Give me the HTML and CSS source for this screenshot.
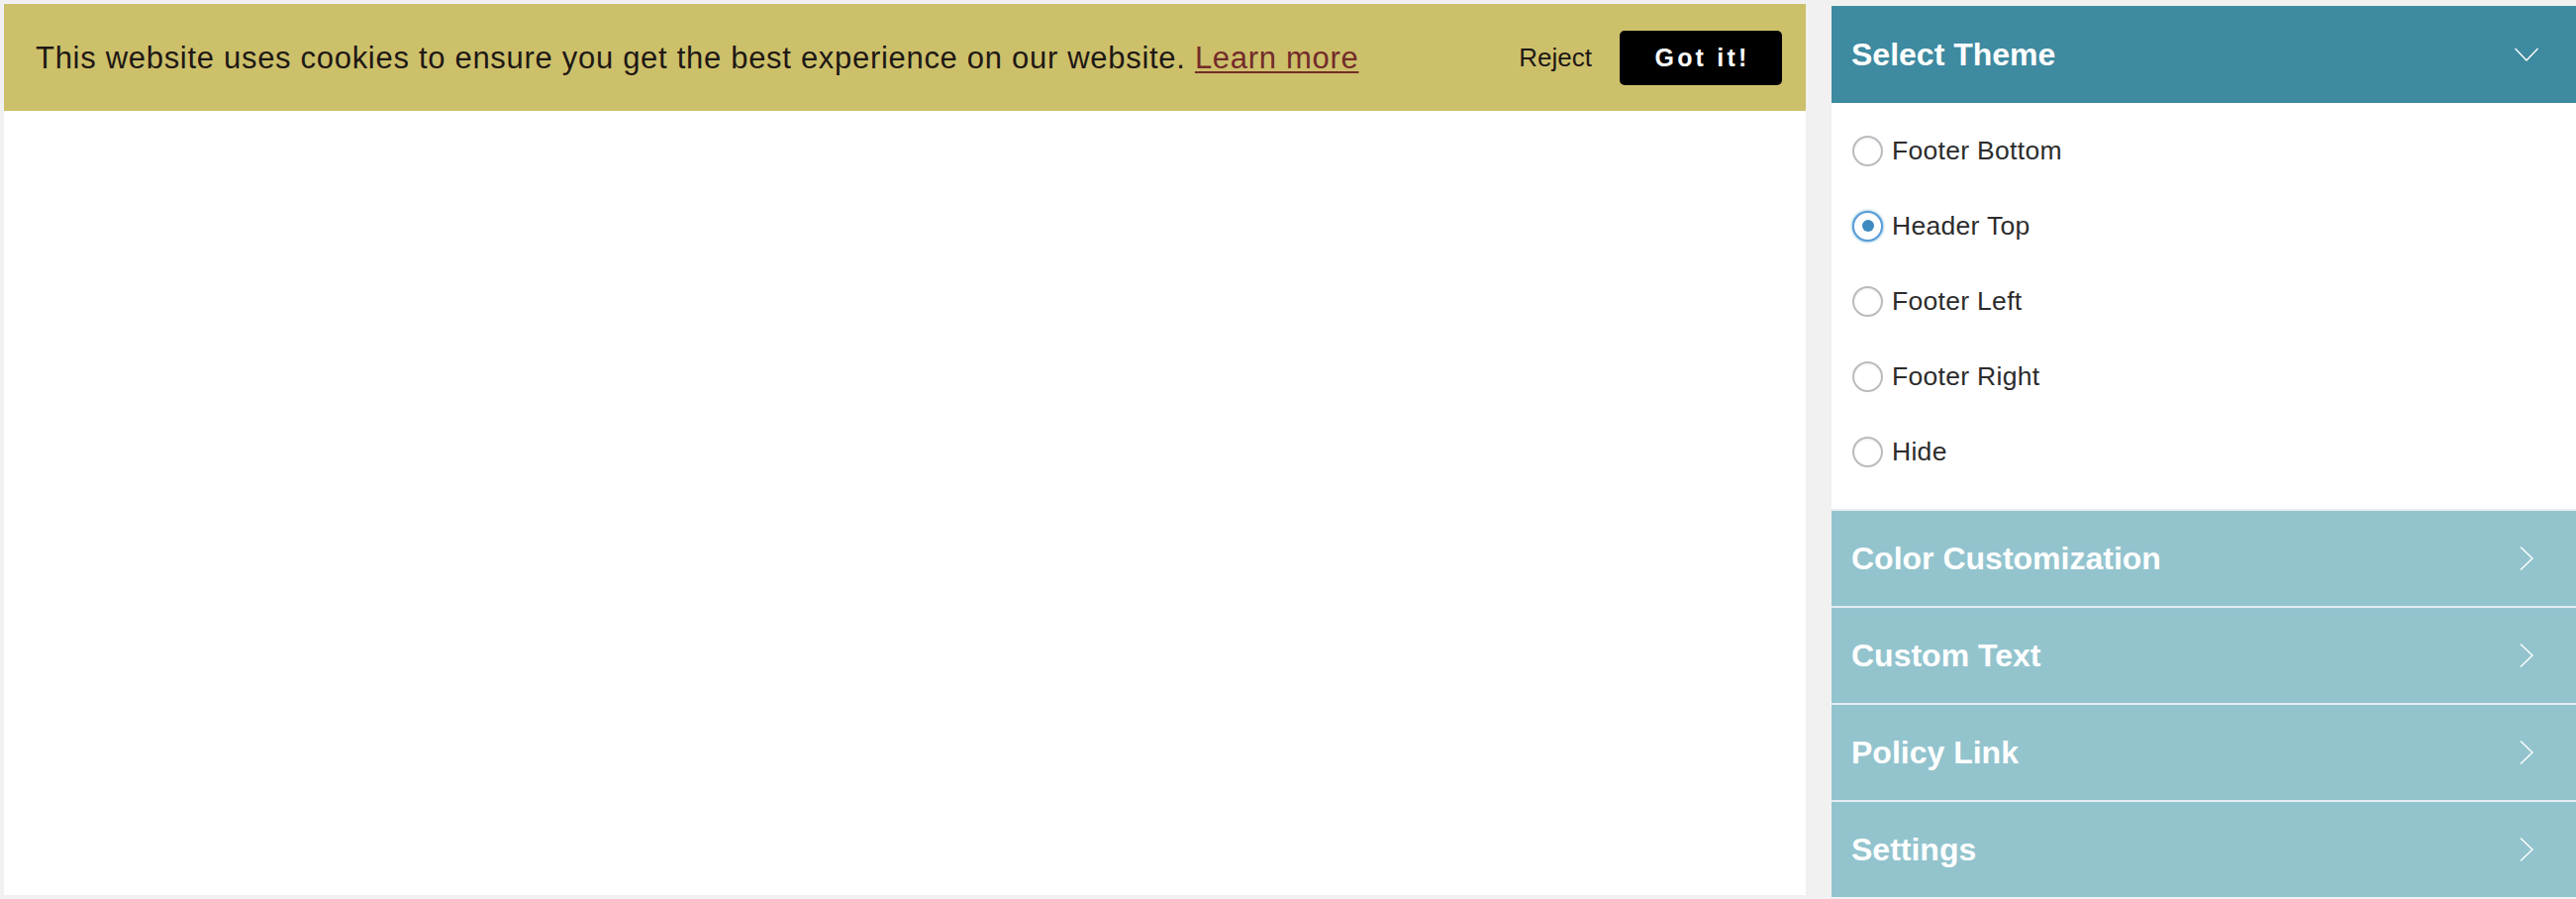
FILE: index.html
```html
<!DOCTYPE html>
<html lang="en">
<head>
<meta charset="utf-8">
<title>Cookie Notice Preview</title>
<link rel="stylesheet" href="styles.css">
</head>
<body>
<div class="page">
  <main class="preview">
    <div class="cookie-bar">
      <p class="cookie-text">This website uses cookies to ensure you get the best experience on our website. <a href="#" class="learn">Learn more</a></p>
      <div class="cookie-actions">
        <button class="reject" type="button">Reject</button>
        <button class="accept" type="button">Got it!</button>
      </div>
    </div>
  </main>
  <aside class="panel">
    <section class="section open">
      <div class="section-head active">
        <span class="section-title">Select Theme</span>
        <svg class="chev" width="24" height="24" viewBox="0 0 24 24"><polyline points="0.5,6 12,18 23.5,6" fill="none" stroke="#fff" stroke-width="1.4"/></svg>
      </div>
      <div class="radio-list">
        <label class="radio-item"><input type="radio" name="theme" class="radio"><span>Footer Bottom</span></label>
        <label class="radio-item"><input type="radio" name="theme" class="radio" checked><span>Header Top</span></label>
        <label class="radio-item"><input type="radio" name="theme" class="radio"><span>Footer Left</span></label>
        <label class="radio-item"><input type="radio" name="theme" class="radio"><span>Footer Right</span></label>
        <label class="radio-item"><input type="radio" name="theme" class="radio"><span>Hide</span></label>
      </div>
    </section>
    <div class="section-head collapsed">
      <span class="section-title">Color Customization</span>
      <svg class="chev" width="24" height="24" viewBox="0 0 24 24"><polyline points="6,0.5 18,12 6,23.5" fill="none" stroke="#fff" stroke-width="1.4"/></svg>
    </div>
    <div class="section-head collapsed">
      <span class="section-title">Custom Text</span>
      <svg class="chev" width="24" height="24" viewBox="0 0 24 24"><polyline points="6,0.5 18,12 6,23.5" fill="none" stroke="#fff" stroke-width="1.4"/></svg>
    </div>
    <div class="section-head collapsed">
      <span class="section-title">Policy Link</span>
      <svg class="chev" width="24" height="24" viewBox="0 0 24 24"><polyline points="6,0.5 18,12 6,23.5" fill="none" stroke="#fff" stroke-width="1.4"/></svg>
    </div>
    <div class="section-head collapsed">
      <span class="section-title">Settings</span>
      <svg class="chev" width="24" height="24" viewBox="0 0 24 24"><polyline points="6,0.5 18,12 6,23.5" fill="none" stroke="#fff" stroke-width="1.4"/></svg>
    </div>
  </aside>
</div>
</body>
</html>
```
FILE: styles.css
```css
html, body {
  margin: 0;
  padding: 0;
}
body {
  background: #f1f1f1;
  font-family: "Liberation Sans", Arial, Helvetica, sans-serif;
  width: 2602px;
  height: 908px;
  overflow: hidden;
}
.page {
  display: flex;
  align-items: flex-start;
  gap: 26px;
  padding: 4px 0 0 4px;
}
.preview {
  width: 1820px;
  height: 900px;
  background: #fff;
  flex-shrink: 0;
}
.cookie-bar {
  height: 108px;
  background: #cdc06b;
  display: flex;
  align-items: center;
  justify-content: space-between;
  padding: 0 24px 0 32px;
  box-sizing: border-box;
}
.cookie-text {
  margin: 0;
  font-size: 31px;
  color: #1e1814;
  letter-spacing: 0.7px;
  padding-top: 2px;
}
.learn {
  color: #732b29;
  text-decoration: underline;
  text-underline-offset: 3px;
  text-decoration-thickness: 2px;
}
.cookie-actions {
  display: flex;
  align-items: center;
  gap: 28px;
}
.reject {
  background: none;
  border: 0;
  padding: 0;
  font-family: inherit;
  font-size: 26px;
  color: #1e1814;
  cursor: pointer;
}
.accept {
  width: 164px;
  height: 55px;
  background: #000;
  color: #fff;
  border: 0;
  border-radius: 5px;
  font-family: inherit;
  font-weight: bold;
  font-size: 25px;
  letter-spacing: 3.2px;
  padding: 0 0 0 3px;
  cursor: pointer;
}
.panel {
  width: 752px;
  margin-top: 2px;
  flex-shrink: 0;
  background: #fff;
}
.section-head {
  display: flex;
  align-items: center;
  justify-content: space-between;
  padding: 0 38px 0 20px;
  color: #fff;
  box-sizing: border-box;
}
.section-head.active {
  height: 98px;
  background: #3e8aa0;
}
.section-head.collapsed {
  height: 98px;
  background: #93c4ce;
  border-top: 2px solid #e4edf0;
}
.section-title {
  font-size: 32px;
  font-weight: bold;
  letter-spacing: 0;
}
.chev {
  display: block;
  flex-shrink: 0;
}
.radio-list {
  display: flex;
  flex-direction: column;
  padding: 10px 20px 20px 20px;
}
.radio-item {
  height: 76px;
  display: flex;
  align-items: center;
  gap: 9px;
  font-size: 26.5px;
  letter-spacing: 0.3px;
  color: #2c2c2c;
}
.radio {
  appearance: none;
  -webkit-appearance: none;
  margin: 0 0 0 1px;
  width: 31px;
  height: 31px;
  border-radius: 50%;
  border: 2px solid #b9bcbf;
  background: #fff;
  box-sizing: border-box;
  box-shadow: inset 0 1px 2px rgba(0,0,0,0.08);
  position: relative;
  flex-shrink: 0;
}
.radio:checked {
  border-color: #5b9dd9;
  box-shadow: 0 0 3px rgba(30,140,190,0.8);
}
.radio:checked::before {
  content: "";
  position: absolute;
  left: 50%;
  top: 50%;
  width: 12px;
  height: 12px;
  margin: -6px 0 0 -6px;
  border-radius: 50%;
  background: #3e8bc0;
}
```
